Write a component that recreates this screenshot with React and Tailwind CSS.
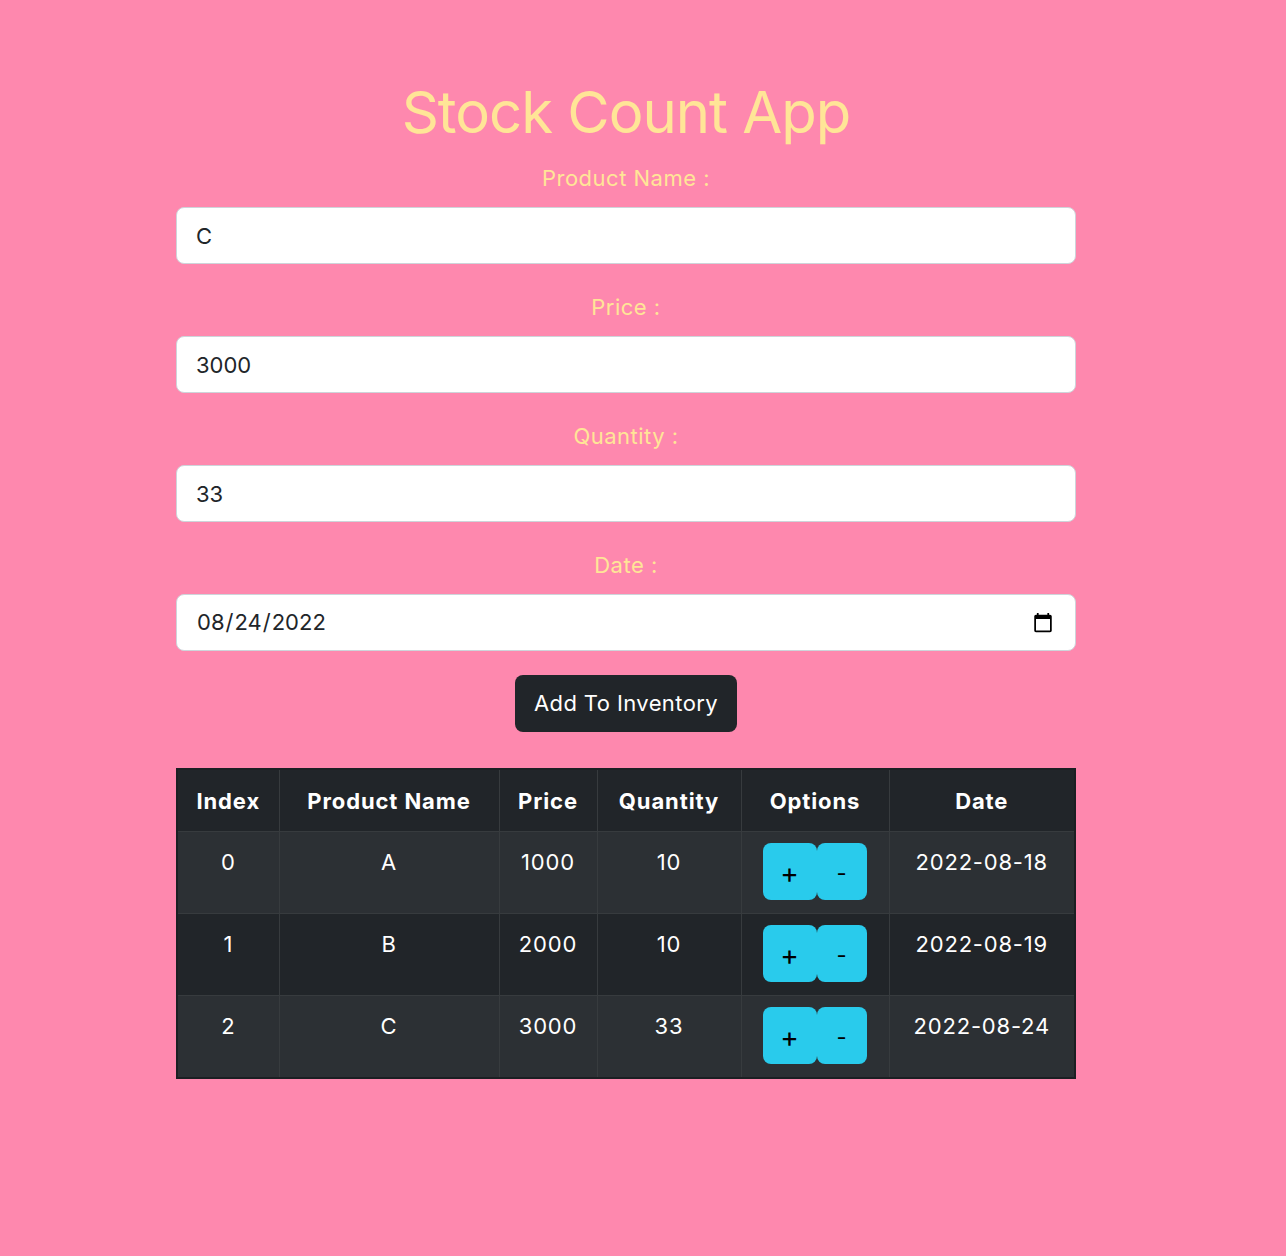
import React from "react";

const rows = [
  { i: 0, name: "A", price: 1000, qty: 10, date: "2022-08-18" },
  { i: 1, name: "B", price: 2000, qty: 10, date: "2022-08-19" },
  { i: 2, name: "C", price: 3000, qty: 33, date: "2022-08-24" },
];

function Field({ label, children }) {
  return (
    <div className="flex flex-col items-stretch">
      <label className="text-center text-[22px] leading-[33px] tracking-[0.5px] text-[#ffe597]">{label}</label>
      <div className="mt-[12.5px]">{children}</div>
    </div>
  );
}

const inputCls =
  "block w-full h-[57px] rounded-lg border border-[#ced4da] bg-white px-[19px] text-[22px] leading-[33px] text-[#212529] outline-none";

const td = "border border-[#373b3e] px-2 pt-[14px] pb-[10px] text-center align-top";

export default function App() {
  return (
    <div
      className="min-h-screen w-full bg-[#fe88ae]"
      style={{ fontFamily: "Inter, 'Noto Sans', sans-serif" }}
    >
      <div className="w-[1252px]">
        <div className="mx-auto flex w-[900px] flex-col pt-[78px] pb-[177px]">
          <h1 className="text-center text-[58px] leading-[69.6px] font-normal tracking-[-1px] text-[#ffe597]">
            Stock Count App
          </h1>
          <div className="mt-[14px] flex flex-col gap-[26.5px]">
            <Field label="Product Name :">
              <input className={inputCls} type="text" defaultValue="C" />
            </Field>
            <Field label="Price :">
              <input className={inputCls} type="number" defaultValue="3000" />
            </Field>
            <Field label="Quantity :">
              <input className={inputCls} type="number" defaultValue="33" />
            </Field>
            <Field label="Date :">
              <input className={inputCls} type="date" defaultValue="2022-08-24" />
            </Field>
          </div>
          <div className="mt-[24px] flex justify-center">
            <button className="h-[57px] w-[222px] rounded-lg bg-[#212529] text-[22px] leading-[33px] tracking-[0.4px] text-white">
              Add To Inventory
            </button>
          </div>
          <table className="mt-[36px] w-[898px] table-fixed border-collapse border-2 border-[#1c1f23] text-[22px] leading-[33px] tracking-[0.8px] text-white">
            <colgroup>
              <col className="w-[102px]" />
              <col className="w-[220px]" />
              <col className="w-[98px]" />
              <col className="w-[144px]" />
              <col className="w-[148px]" />
              <col className="w-[186px]" />
            </colgroup>
            <thead>
              <tr className="bg-[#212529]">
                {["Index", "Product Name", "Price", "Quantity", "Options", "Date"].map((h) => (
                  <th
                    key={h}
                    className="h-[62px] border border-[#373b3e] px-1 pt-[2px] text-center align-middle font-bold tracking-[0.9px]"
                  >
                    {h}
                  </th>
                ))}
              </tr>
            </thead>
            <tbody>
              {rows.map((r) => (
                <tr key={r.i} className={r.i % 2 === 0 ? "bg-[#2c3034]" : "bg-[#212529]"}>
                  <td className={td}>{r.i}</td>
                  <td className={td}>{r.name}</td>
                  <td className={td}>{r.price}</td>
                  <td className={td}>{r.qty}</td>
                  <td className="border border-[#373b3e] px-2 pt-[11px] pb-[13px] text-center align-top">
                    <div className="flex justify-center">
                      <button className="flex h-[57px] w-[54px] items-center justify-center rounded-lg bg-[#29cbec] pt-[3px] text-[28px] leading-none text-black">
                        +
                      </button>
                      <button className="flex h-[57px] w-[50px] items-center justify-center rounded-lg bg-[#29cbec] pt-[4px] text-[22px] leading-none text-black">
                        -
                      </button>
                    </div>
                  </td>
                  <td className={td}>{r.date}</td>
                </tr>
              ))}
            </tbody>
          </table>
        </div>
      </div>
    </div>
  );
}
